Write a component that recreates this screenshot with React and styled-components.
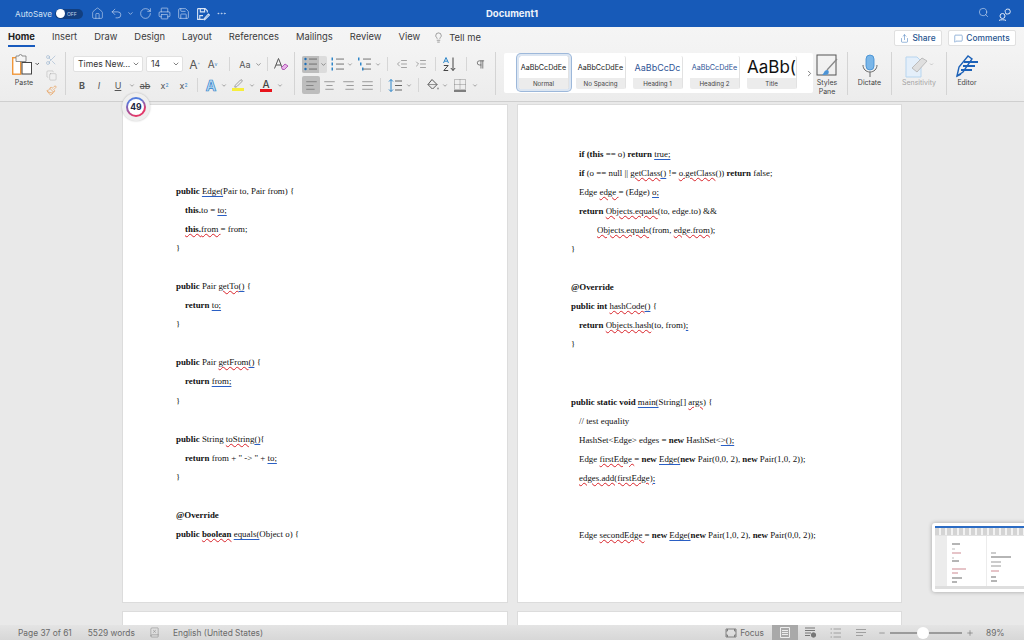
import React from "react";
import styled, { createGlobalStyle } from "styled-components";
import {
  Home, Undo2, RotateCw, Printer, Save, MoreHorizontal, Search, Lightbulb, Share, MessageSquare,
  Scissors, Copy, Paintbrush, ChevronDown, ChevronRight, IndentDecrease, IndentIncrease, Pilcrow,
  AlignLeft, AlignCenter, AlignRight, AlignJustify, Minus, Plus, BookX, Pen,
} from "lucide-react";

const Global = createGlobalStyle`
  html, body { margin: 0; padding: 0; background: #e9e9e9; }
  body { font-family: "Inter", "Liberation Sans", sans-serif; }
`;

const Shell = styled.div`
  position: relative;
  width: 1024px;
  height: 640px;
  display: flex;
  flex-direction: column;
  overflow: hidden;
`;

/* title bar */
const TitleBar = styled.header`
  height: 27px;
  flex: none;
  background: #175ab8;
  color: #dfe9f7;
  display: flex;
  align-items: center;
  padding: 0 12px 0 15px;
  position: relative;
`;
const AutoSave = styled.span`
  font-size: 8.2px;
  width: 40px;
  color: #d5e2f4;
`;
const Toggle = styled.span`
  width: 28px;
  height: 10px;
  border-radius: 6px;
  background: #123f80;
  display: flex;
  align-items: center;
  font-size: 5px;
  color: #c6d5ea;
  margin-right: 4px;
  &::before {
    content: "";
    width: 9px;
    height: 9px;
    border-radius: 50%;
    background: #fff;
    margin: 0 2px 0 1px;
  }
`;
const TitleBtn = styled.span`
  width: ${(p) => p.$w}px;
  display: flex;
  justify-content: center;
  color: #dbe6f6;
`;
const DocTitle = styled.span`
  position: absolute;
  left: 0;
  right: 0;
  text-align: center;
  font-size: 9.5px;
  font-weight: 700;
  color: #eef3fb;
  pointer-events: none;
`;
const TitleRight = styled.div`
  margin-left: auto;
  display: flex;
  gap: 9px;
  color: #e4ecf8;
`;

/* tabs */
const TabRow = styled.nav`
  height: 24px;
  flex: none;
  background: linear-gradient(#f5f5f5, #f3f3f3);
  display: flex;
  align-items: flex-start;
  padding: 0 8px;
  gap: 17px;
  position: relative;
`;
const Tab = styled.span`
  font-size: 9.4px;
  line-height: 20px;
  color: ${(p) => (p.$active ? "#222" : "#3b3b3b")};
  font-weight: ${(p) => (p.$active ? 700 : 400)};
  position: relative;
  ${(p) => p.$active && `
    &::after {
      content: "";
      position: absolute;
      left: 0;
      right: 0;
      bottom: 0;
      height: 2px;
      background: #185abd;
    }
  `}
`;
const TellMe = styled.span`
  display: flex;
  align-items: center;
  gap: 5px;
  height: 20px;
  margin-left: -4px;
  font-size: 9.4px;
  color: #3b3b3b;
`;
const TabActions = styled.div`
  margin: 3px 0 0 auto;
  display: flex;
  gap: 6px;
`;
const ActionBtn = styled.span`
  height: 16px;
  width: ${(p) => p.$w}px;
  background: #fff;
  border: 1px solid #e0e0e0;
  border-radius: 2px;
  box-sizing: border-box;
  display: flex;
  align-items: center;
  justify-content: center;
  gap: 3px;
  font-size: 8.4px;
  font-weight: 500;
  color: #27558f;
`;

/* ribbon */
const Ribbon = styled.section`
  height: 51px;
  flex: none;
  background: linear-gradient(#f3f3f3, #ececec);
  border-bottom: 1px solid #cfcfcf;
  box-sizing: border-box;
  display: flex;
  align-items: stretch;
`;
const Group = styled.div`
  width: ${(p) => p.$w}px;
  flex: none;
  box-sizing: border-box;
  padding: 5px 0 0 ${(p) => p.$pad ?? 8}px;
  margin: 1px 0 6px;
  border-right: 1px solid #d4d4d4;
  display: flex;
  flex-direction: column;
  gap: 5px;
`;
const ToolRow = styled.div`
  display: flex;
  align-items: center;
  height: 16px;
  margin-top: ${(p) => p.$top ?? 0}px;
`;
const Tool = styled.span`
  width: ${(p) => p.$w}px;
  flex: none;
  height: ${(p) => (p.$active ? 18 : 16)}px;
  display: flex;
  align-items: center;
  justify-content: center;
  font-size: ${(p) => p.$size ?? 9}px;
  font-weight: ${(p) => (p.$bold ? 700 : 400)};
  font-style: ${(p) => (p.$italic ? "italic" : "normal")};
  text-decoration: ${(p) => p.$deco ?? "none"};
  color: ${(p) => p.$color ?? "#555"};
  background: ${(p) => (p.$active ? "#bdbdbd" : "transparent")};
  border-radius: 2px;
`;
const OutlineA = styled(Tool)`
  font-size: 14px;
  font-weight: 700;
  color: #b9dcf6;
  -webkit-text-stroke: 0.7px #2f7fc8;
`;
const Raised = styled.sup`
  font-size: 5px;
  color: #2e86c9;
`;
const Lowered = styled.sub`
  font-size: 5px;
  color: #2e86c9;
`;
const Sep = styled.span`
  width: ${(p) => p.$w}px;
  flex: none;
  height: 14px;
  display: flex;
  justify-content: center;
  &::before {
    content: "";
    width: 1px;
    background: #d6d6d6;
  }
`;
const Chev = ({ w = 6 }) => (
  <Tool $w={w}>
    <ChevronDown size={7} strokeWidth={2} color="#555" />
  </Tool>
);
const FontBox = styled.span`
  width: ${(p) => p.$w}px;
  flex: none;
  height: 16px;
  margin-right: 3px;
  background: #fff;
  border: 1px solid #e1e1e1;
  border-radius: 2px;
  box-sizing: border-box;
  display: flex;
  align-items: center;
  justify-content: space-between;
  padding: 0 2px 0 4px;
  font-size: 8.6px;
  color: #333;
`;
const SplitBullets = styled.span`
  width: 25px;
  flex: none;
  height: 17px;
  background: #dcdcdc;
  border-radius: 2px;
  display: flex;
  align-items: center;
`;
const BulletPart = styled.span`
  width: 17px;
  height: 17px;
  background: #bdbdbd;
  border-radius: 2px 0 0 2px;
  display: flex;
  align-items: center;
  justify-content: center;
`;
const Clip = styled.div`
  display: flex;
  gap: 5px;
  margin-top: -3px;
`;
const PasteCol = styled.div`
  display: flex;
  flex-direction: column;
  align-items: center;
  width: 32px;
  font-size: 7px;
  color: #444;
  gap: 3px;
`;
const ClipCol = styled.div`
  display: flex;
  flex-direction: column;
  align-items: center;
  gap: 4px;
`;
const Swatch = styled.span`
  display: flex;
  flex-direction: column;
  align-items: center;
  font-size: 10px;
  line-height: 10px;
  font-weight: 500;
  color: #444;
  &::after {
    content: "";
    width: 12px;
    height: 3px;
    background: ${(p) => p.$bar};
  }
`;

/* style gallery */
const Gallery = styled.div`
  width: 309px;
  flex: none;
  height: 40px;
  margin: 2px 0 0 8px;
  background: #fff;
  border-radius: 2px;
  display: flex;
  align-items: flex-start;
  padding-left: 15px;
  box-sizing: border-box;
  gap: 7px;
`;
const StyleCard = styled.div`
  width: 50px;
  flex: none;
  margin-top: 3px;
  height: 33px;
  display: flex;
  flex-direction: column;
  border-radius: 2px;
  box-shadow: ${(p) => (p.$on ? "0 0 0 2px #dce6f2, 0 0 0 3px #9db8da" : "none")};
  border-right: 1px solid #e2e2e2;
  box-sizing: border-box;
  overflow: hidden;
`;
const StyleSample = styled.div`
  height: 22px;
  display: flex;
  align-items: center;
  justify-content: center;
  white-space: nowrap;
  overflow: hidden;
  font-size: ${(p) => p.$size ?? 7.2}px;
  color: ${(p) => p.$ink ?? "#222"};
`;
const StyleName = styled.div`
  height: 11px;
  background: #ececec;
  color: #444;
  font-size: 6.2px;
  text-align: center;
  line-height: 11px;
`;
const GalleryNext = styled.span`
  display: flex;
  align-self: center;
  margin-left: 1px;
  color: #555;
`;
const BigCol = styled.div`
  width: ${(p) => p.$w}px;
  flex: none;
  border-right: ${(p) => (p.$line ? "1px solid #d4d4d4" : "none")};
  margin: 1px 0 6px;
  box-sizing: border-box;
  display: flex;
  flex-direction: column;
  align-items: center;
  font-size: 7px;
  line-height: 9px;
  text-align: center;
  color: ${(p) => (p.$dim ? "#a4a4a4" : "#444")};
  padding: 2px ${(p) => p.$nudge ?? 0}px 0 0;
`;
const BigIcon = styled.span`
  height: 24px;
  flex: none;
  display: flex;
`;

/* document */
const Canvas = styled.main`
  flex: 1;
  min-height: 0;
  overflow: hidden;
  background: #e9e9e9;
  padding: 2px 0 0 122px;
  display: grid;
  grid-template-columns: 386px 385px;
  grid-auto-rows: min-content;
  column-gap: 9px;
  row-gap: 8px;
`;
const Page = styled.article`
  height: ${(p) => p.$h}px;
  background: #fff;
  border: 1px solid #dcdcdc;
  box-sizing: border-box;
  padding: ${(p) => p.$top}px 0 0 53px;
  font-family: "Liberation Serif", "Times New Roman", serif;
  font-size: 8.9px;
  color: #111;
`;
const Line = styled.div`
  height: 19.05px;
  line-height: 19.05px;
  white-space: pre;
  padding-left: ${(p) => p.$in ?? 0}px;
`;
const Bad = styled.span`
  text-decoration: underline wavy #d8232a 0.6px;
  text-underline-offset: 1px;
`;
const Gram = styled.span`
  text-decoration: underline solid #2a5fc4 1px;
  text-underline-offset: 1.5px;
`;
const B = styled.b`
  font-weight: 700;
`;

/* status bar */
const Status = styled.footer`
  height: 15px;
  flex: none;
  background: linear-gradient(#e4e4e4, #d7d7d7);
  display: flex;
  align-items: center;
  padding: 0 12px 0 18px;
  font-size: 8.4px;
  color: #6a6a6a;
`;
const StatusText = styled.span`
  margin: 0 ${(p) => p.$gap ?? 0}px 0 ${(p) => p.$lead ?? 0}px;
  white-space: nowrap;
`;
const StatusRight = styled.div`
  margin-left: auto;
  display: flex;
  align-items: center;
  height: 15px;
`;
const ViewBtn = styled.span`
  width: ${(p) => p.$w}px;
  height: 15px;
  display: flex;
  align-items: center;
  justify-content: center;
  background: ${(p) => (p.$on ? "#a9a9a9" : "transparent")};
  color: ${(p) => (p.$on ? "#eee" : p.$dim ? "#a0a0a0" : "#777")};
`;
const ZoomControl = styled.span`
  display: flex;
  align-items: center;
  margin-left: 5px;
`;
const Slider = styled.span`
  width: 72px;
  height: 2px;
  background: #9b9b9b;
  position: relative;
  margin: 0 4px;
  &::after {
    content: "";
    position: absolute;
    left: 27px;
    top: -5px;
    width: 12px;
    height: 12px;
    border-radius: 50%;
    background: #fff;
  }
`;
const ZoomValue = styled.span`
  width: 38px;
  padding-left: 12px;
  box-sizing: border-box;
  white-space: nowrap;
`;

/* floating things */
const Badge = styled.div`
  position: absolute;
  left: 122px;
  top: 93px;
  width: 28px;
  height: 28px;
  border-radius: 50%;
  background: #efefef;
  box-shadow: 0 0 2px rgba(0, 0, 0, 0.25);
  display: flex;
  align-items: center;
  justify-content: center;
`;
const BadgeRing = styled.div`
  width: 20px;
  height: 20px;
  border-radius: 50%;
  background: conic-gradient(from 300deg, #5a76d8, #4f7fe0 25%, #e2386a 45%, #e2386a 70%, #5a76d8);
  display: flex;
  align-items: center;
  justify-content: center;
  &::before {
    content: "49";
    width: 16px;
    height: 16px;
    line-height: 16px;
    text-align: center;
    border-radius: 50%;
    background: #fff;
    font-size: 8.6px;
    font-weight: 700;
    color: #1c2340;
  }
`;
const Thumb = styled.div`
  position: absolute;
  left: 932px;
  top: 523px;
  width: 96px;
  height: 69px;
  background: #fff;
  border-radius: 3px;
  box-shadow: 0 0 4px rgba(0, 0, 0, 0.3);
  padding: 3px;
  box-sizing: border-box;
  display: flex;
  flex-direction: column;
`;
const ThumbBar = styled.div`
  height: 2px;
  flex: none;
  background: #2b6cc4;
`;
const ThumbRibbon = styled.div`
  height: 8px;
  flex: none;
  background: repeating-linear-gradient(90deg, #d4d4d4 0 4px, #f2f2f2 4px 6px);
  border-bottom: 1px solid #e2e2e2;
  box-sizing: border-box;
`;
const ThumbBody = styled.div`
  flex: 1;
  min-height: 0;
  background: #ececec;
  padding-left: 12px;
  display: flex;
  gap: 1px;
`;
const ThumbPage = styled.div`
  width: 40px;
  background: #fff;
  padding: ${(p) => p.$top}px 0 0 ${(p) => p.$left}px;
  box-sizing: border-box;
`;
const ThumbLine = styled.div`
  height: 2px;
  width: ${(p) => p.$w}px;
  background: ${(p) => p.$c};
  margin-bottom: ${(p) => p.$gap}px;
`;
const ThumbStatus = styled.div`
  height: 3px;
  flex: none;
  background: #dedede;
`;

/* drawn icons */
const PasteIcon = () => (
  <svg width="32" height="21" viewBox="0 0 32 21" fill="none">
    <rect x="4.700" y="3.700" width="8" height="16.500" fill="#fff" stroke="#f0973a" strokeWidth="1.400" />
    <path d="M8 4V2h3a1.500 1.500 0 0 1 3 0h4v5.500H8Z" fill="#f4f4f4" stroke="#777" strokeWidth=".8" />
    <rect x="14" y="8.500" width="9.500" height="11.500" fill="#fff" stroke="#444" strokeWidth="1" />
    <path d="M27.500 9l1.700 1.700L31 9" stroke="#555" strokeWidth="1" />
  </svg>
);
const ListGlyph = ({ kind }) => {
  const ys = [3, 8, 13];
  const x = kind === "multi" ? [6, 9, 6] : [6, 6, 6];
  return (
    <svg width="15" height="16" viewBox="0 0 15 16">
      {ys.map((y, i) => (
        <g key={y}>
          {kind === "bullets" ? (
            <circle cx="2.500" cy={y} r="1.200" fill="#1f6fb8" />
          ) : (
            <rect x={kind === "multi" ? i * 2 + 1 : 1.500} y={y - 1.500} width="1.500" height="3" fill="#2e86c9" />
          )}
          <rect x={x[i]} y={y - 0.400} width={14 - x[i]} height="0.900" fill="#666" />
        </g>
      ))}
    </svg>
  );
};
const SortIcon = () => (
  <svg width="16" height="16" viewBox="0 0 16 16" fill="none">
    <path d="M1.500 7 4 1.500 6.500 7M2.400 5.200h3.200" stroke="#2e86c9" strokeWidth="1" />
    <path d="M1.800 9.500h4.400l-4.400 5h4.400" stroke="#444" strokeWidth="1" />
    <path d="M11 1.500v13M8.800 12l2.200 2.500 2.200-2.500" stroke="#444" strokeWidth="1" />
  </svg>
);
const SpacingIcon = () => (
  <svg width="15" height="15" viewBox="0 0 15 15" fill="none">
    <path d="M3 1.500v12M1 3.500l2-2 2 2M1 11.500l2 2 2-2" stroke="#2e86c9" strokeWidth="1" />
    <path d="M7 3h7M7 7.500h7M7 12h7" stroke="#666" strokeWidth="1" />
  </svg>
);
const ShadeIcon = () => (
  <svg width="14" height="14" viewBox="0 0 14 14" fill="none">
    <path d="M6 1.500 11 6.500 6.500 11 2 6.500Z" stroke="#555" strokeWidth="1" />
    <path d="M2 6.500h9L6.500 11Z" fill="#e9e9e9" stroke="#555" strokeWidth=".6" />
    <circle cx="12" cy="10.500" r="1" fill="#999" />
  </svg>
);
const BorderIcon = () => (
  <svg width="14" height="14" viewBox="0 0 14 14" fill="none">
    <rect x="1.500" y="1.500" width="11" height="10" stroke="#777" strokeWidth=".8" strokeDasharray="1 1" />
    <path d="M7 1.500v10M1.500 6.500h11" stroke="#777" strokeWidth=".8" strokeDasharray="1 1" />
    <path d="M1 13h12" stroke="#333" strokeWidth="1.200" />
  </svg>
);
const ClearIcon = () => (
  <svg width="16" height="14" viewBox="0 0 16 14" fill="none">
    <path d="M1.500 11.500 5.500 1.500 9.500 11.500M3 8h5" stroke="#555" strokeWidth="1" />
    <path d="M8.500 10.500 12 7l3 2-3.500 3.500h-2Z" fill="#e7b3e8" stroke="#a33ca8" strokeWidth=".8" />
  </svg>
);
const StylesPaneIcon = () => (
  <svg width="22" height="23" viewBox="0 0 22 23" fill="none">
    <rect x="1" y="1" width="19" height="20" stroke="#555" strokeWidth="1" />
    <path d="M21 5 11 16" stroke="#888" strokeWidth="1.300" />
    <path d="M6 21c2-1 2-5 5-5 2 0 2 2 1.500 3.500-.5 1-2 1.500-6.500 1.500Z" fill="#4b93d6" />
  </svg>
);
const MicIcon = () => (
  <svg width="18" height="24" viewBox="0 0 18 24" fill="none">
    <rect x="5" y="1" width="8" height="15" rx="4" fill="#7ab6e8" stroke="#3d8bd0" strokeWidth=".8" />
    <path d="M2 11c0 4 3 7 7 7s7-3 7-7M9 18v5" stroke="#666" strokeWidth="1" />
  </svg>
);
const SensitivityIcon = () => (
  <svg width="30" height="24" viewBox="0 0 30 24" fill="none">
    <path d="M2 3h11l4 4v16H2Z" fill="#e4effa" stroke="#b7d5ef" strokeWidth="1" />
    <path d="M8 14 18 4l5 3-10 11Z" fill="#dfdfdf" stroke="#bcbcbc" strokeWidth="1" />
    <path d="M26 9.500l1.500 1.500L29 9.500" stroke="#bbb" strokeWidth=".8" />
  </svg>
);
const EditorIcon = () => (
  <svg width="24" height="24" viewBox="0 0 24 24" fill="none">
    <path d="M2 22 4 13 13 2l4 3-9 13Z" stroke="#1d62b8" strokeWidth="1.400" />
    <path d="M9 8h14M8 12h12M6 16h11" stroke="#1d62b8" strokeWidth="2" />
    <path d="M2 22l4-2" stroke="#1d62b8" strokeWidth="1.400" />
  </svg>
);
const FocusIcon = () => (
  <svg width="12" height="10" viewBox="0 0 12 10" fill="none" stroke="#777" strokeWidth=".9">
    <path d="M1 1h10v8H1ZM1 3h1.500V1M11 3H9.500V1M1 7h1.500v2M11 7H9.500v2" />
  </svg>
);
const SaveAsIcon = () => (
  <svg width="14" height="14" viewBox="0 0 13 13" fill="none" stroke="#dbe6f6" strokeWidth="1">
    <path d="M1.500 1.500h7l2 2v1.500M1.500 1.500v10h5M4 1.500v3h4v-3M3.500 11.500V8h3" />
    <path d="M7 11.500 11.500 6.500l1 1L8 12Z" />
  </svg>
);
const PeopleIcon = () => (
  <svg width="14" height="14" viewBox="0 0 14 14" fill="none" stroke="#e4ecf8" strokeWidth="1">
    <circle cx="4.500" cy="9" r="2.500" />
    <path d="M7.500 5.500a2.500 2.500 0 1 1 2 1.500H8Z" />
    <path d="M1 13.500c.5-1 6-1 7 0" />
  </svg>
);
const PrintLayoutIcon = () => (
  <svg width="12" height="11" viewBox="0 0 12 11" fill="none" stroke="currentColor" strokeWidth="1">
    <path d="M1.500 .500h9v10h-9ZM3 3.500h6M3 5.500h6M3 7.500h6" />
  </svg>
);
const WebLayoutIcon = () => (
  <svg width="13" height="11" viewBox="0 0 13 11" fill="none" stroke="currentColor" strokeWidth="1">
    <path d="M1 1h10M1 3.500h10M1 6h6M1 8.500h5" />
    <circle cx="9.500" cy="8" r="2.200" fill="currentColor" />
  </svg>
);
const OutlineIcon = () => (
  <svg width="12" height="10" viewBox="0 0 12 10" fill="none" stroke="currentColor" strokeWidth="1">
    <path d="M3.500 1H11M3.500 5H11M3.500 9H11M.500 1h1.500M.500 5h1.500M.500 9h1.500" />
  </svg>
);
const DraftIcon = () => (
  <svg width="12" height="10" viewBox="0 0 12 10" fill="none" stroke="currentColor" strokeWidth="1">
    <path d="M1 1.500h10M1 4.500h10M1 7.500h7" />
  </svg>
);

const leftPage = (
  <>
    <Line><B>public</B> <Gram>Edge(</Gram>Pair to, Pair from) {"{"}</Line>
    <Line $in={9}><B>this.</B>to = <Gram>to;</Gram></Line>
    <Line $in={9}><Bad><B>this.</B>from </Bad>= from;</Line>
    <Line>{"}"}</Line>
    <Line />
    <Line><B>public</B> Pair <Bad>getTo</Bad><Gram>()</Gram> {"{"}</Line>
    <Line $in={9}><B>return</B> <Gram>to;</Gram></Line>
    <Line>{"}"}</Line>
    <Line />
    <Line><B>public</B> Pair <Bad>getFrom</Bad><Gram>()</Gram> {"{"}</Line>
    <Line $in={9}><B>return</B> <Gram>from;</Gram></Line>
    <Line>{"}"}</Line>
    <Line />
    <Line><B>public</B> String <Bad>toString</Bad><Gram>()</Gram>{"{"}</Line>
    <Line $in={9}><B>return</B> from + " -&gt; " + <Gram>to;</Gram></Line>
    <Line>{"}"}</Line>
    <Line />
    <Line><B>@Override</B></Line>
    <Line><B>public</B> <Bad><B>boolean</B></Bad> <Gram>equals(</Gram>Object o) {"{"}</Line>
  </>
);

const rightPage = (
  <>
    <Line $in={8}><B>if (this</B> == o) <B>return</B> <Gram>true;</Gram></Line>
    <Line $in={8}><B>if</B> (o == null || <Bad>getClass</Bad><Gram>()</Gram> != <Bad>o.getClass</Bad>()) <B>return</B> false;</Line>
    <Line $in={8}>Edge <Bad>edge </Bad>= (Edge) <Gram>o;</Gram></Line>
    <Line $in={8}><B>return</B> <Bad>Objects.equals</Bad>(to, edge.to) &amp;&amp;</Line>
    <Line $in={26}><Bad>Objects.equals</Bad>(from, <Bad>edge.from</Bad>);</Line>
    <Line>{"}"}</Line>
    <Line />
    <Line><B>@Override</B></Line>
    <Line><B>public int</B> <Bad>hashCode</Bad><Gram>()</Gram> {"{"}</Line>
    <Line $in={8}><B>return</B> <Bad>Objects.hash</Bad>(to, from)<Gram>;</Gram></Line>
    <Line>{"}"}</Line>
    <Line />
    <Line />
    <Line><B>public static void</B> <Gram>main(</Gram>String[] <Bad>args</Bad>) {"{"}</Line>
    <Line $in={8}>// test equality</Line>
    <Line $in={8}>HashSet&lt;Edge&gt; edges = <B>new</B> HashSet&lt;<Gram>&gt;();</Gram></Line>
    <Line $in={8}>Edge <Bad>firstEdge </Bad>= <B>new</B> <Gram>Edge(</Gram><B>new</B> Pair(0,0, 2), <B>new</B> Pair(1,0, 2));</Line>
    <Line $in={8}><Bad>edges.add(firstEdge)</Bad><Gram>;</Gram></Line>
    <Line />
    <Line />
    <Line $in={8}>Edge <Bad>secondEdge </Bad>= <B>new</B> <Gram>Edge(</Gram><B>new</B> Pair(1,0, 2), <B>new</B> Pair(0,0, 2));</Line>
  </>
);

const INK = "#b5b5b5";
const PINK = "#e6c4c8";
const thumbLeft = [
  { w: 8, c: INK, gap: 3 }, { w: 3, c: "#ddd", gap: 2 }, { w: 9, c: PINK, gap: 3 }, { w: 2, c: "#ddd", gap: 1 },
  { w: 7, c: INK, gap: 6 }, { w: 14, c: PINK, gap: 2 }, { w: 6, c: PINK, gap: 3 }, { w: 10, c: INK, gap: 2 },
  { w: 5, c: INK, gap: 0 },
];
const thumbRight = [
  { w: 5, c: "#ccc", gap: 2 }, { w: 20, c: INK, gap: 3 }, { w: 10, c: "#ccc", gap: 2 }, { w: 10, c: "#ccc", gap: 3 },
  { w: 8, c: PINK, gap: 4 }, { w: 5, c: INK, gap: 2 }, { w: 6, c: INK, gap: 0 },
];

export default function App() {
  return (
    <Shell>
      <Global />
      <TitleBar>
        <AutoSave>AutoSave</AutoSave>
        <Toggle>OFF</Toggle>
        <TitleBtn $w={20}><Home size={13} strokeWidth={1} /></TitleBtn>
        <TitleBtn $w={18}><Undo2 size={13} strokeWidth={1.1} /></TitleBtn>
        <TitleBtn $w={10}><ChevronDown size={7} /></TitleBtn>
        <TitleBtn $w={20}><RotateCw size={13} strokeWidth={1.1} /></TitleBtn>
        <TitleBtn $w={18}><Printer size={13} strokeWidth={1.1} /></TitleBtn>
        <TitleBtn $w={20}><Save size={13} strokeWidth={1.1} /></TitleBtn>
        <TitleBtn $w={19}><SaveAsIcon /></TitleBtn>
        <TitleBtn $w={18}><MoreHorizontal size={11} strokeWidth={1.4} /></TitleBtn>
        <DocTitle>Document1</DocTitle>
        <TitleRight>
          <Search size={11} strokeWidth={1.2} />
          <PeopleIcon />
        </TitleRight>
      </TitleBar>

      <TabRow>
        <Tab $active>Home</Tab>
        <Tab>Insert</Tab>
        <Tab>Draw</Tab>
        <Tab>Design</Tab>
        <Tab>Layout</Tab>
        <Tab>References</Tab>
        <Tab>Mailings</Tab>
        <Tab>Review</Tab>
        <Tab>View</Tab>
        <TellMe><Lightbulb size={11} strokeWidth={1} />Tell me</TellMe>
        <TabActions>
          <ActionBtn $w={48}><Share size={9} strokeWidth={1.3} color="#2d6cb5" />Share</ActionBtn>
          <ActionBtn $w={68}><MessageSquare size={9} strokeWidth={1.3} color="#2d6cb5" />Comments</ActionBtn>
        </TabActions>
      </TabRow>

      <Ribbon>
        <Group $w={66} $pad={8}>
          <Clip>
            <PasteCol>
              <PasteIcon />
              Paste
            </PasteCol>
            <ClipCol>
              <Scissors size={12} strokeWidth={1} color="#8aa9c8" />
              <Copy size={11} strokeWidth={1} color="#aaa" />
              <Paintbrush size={11} strokeWidth={1.2} color="#e88c36" />
            </ClipCol>
          </Clip>
        </Group>

        <Group $w={229} $pad={7}>
          <ToolRow $top={-1}>
            <FontBox $w={70}>Times New...<ChevronDown size={8} color="#444" /></FontBox>
            <FontBox $w={37}>14<ChevronDown size={8} color="#444" /></FontBox>
            <Tool $w={17} $size={12}>A<Raised>^</Raised></Tool>
            <Tool $w={19} $size={10}>A<Raised>v</Raised></Tool>
            <Sep $w={14} />
            <Tool $w={18}>Aa</Tool>
            <Chev w={8} />
            <Sep $w={10} />
            <Tool $w={18}><ClearIcon /></Tool>
          </ToolRow>
          <ToolRow>
            <Tool $w={18} $bold>B</Tool>
            <Tool $w={16} $italic>I</Tool>
            <Tool $w={22} $deco="underline">U</Tool>
            <Chev />
            <Tool $w={20} $deco="line-through">ab</Tool>
            <Tool $w={19}>x<Lowered>2</Lowered></Tool>
            <Tool $w={19}>x<Raised>2</Raised></Tool>
            <Sep $w={8} />
            <OutlineA $w={20}>A</OutlineA>
            <Chev />
            <Tool $w={22}><Swatch $bar="#f6ee3c"><Pen size={9} strokeWidth={1.2} /></Swatch></Tool>
            <Chev />
            <Tool $w={22}><Swatch $bar="#e8141c">A</Swatch></Tool>
            <Chev />
          </ToolRow>
        </Group>

        <Group $w={201} $pad={7}>
          <ToolRow $top={-1}>
            <SplitBullets>
              <BulletPart><ListGlyph kind="bullets" /></BulletPart>
              <Chev w={8} />
            </SplitBullets>
            <Tool $w={20}><ListGlyph kind="numbers" /></Tool>
            <Chev />
            <Tool $w={22}><ListGlyph kind="multi" /></Tool>
            <Chev />
            <Sep $w={12} />
            <Tool $w={18}><IndentDecrease size={12} strokeWidth={1} /></Tool>
            <Tool $w={20}><IndentIncrease size={12} strokeWidth={1} /></Tool>
            <Sep $w={8} />
            <Tool $w={22}><SortIcon /></Tool>
            <Sep $w={10} />
            <Tool $w={18}><Pilcrow size={11} strokeWidth={1.6} /></Tool>
          </ToolRow>
          <ToolRow>
            <Tool $w={18} $active><AlignLeft size={13} strokeWidth={1} /></Tool>
            <Tool $w={18}><AlignCenter size={13} strokeWidth={1} /></Tool>
            <Tool $w={20}><AlignRight size={13} strokeWidth={1} /></Tool>
            <Tool $w={18}><AlignJustify size={13} strokeWidth={1} /></Tool>
            <Sep $w={8} />
            <Tool $w={22}><SpacingIcon /></Tool>
            <Chev />
            <Sep $w={12} />
            <Tool $w={18}><ShadeIcon /></Tool>
            <Chev />
            <Tool $w={24}><BorderIcon /></Tool>
            <Chev />
          </ToolRow>
        </Group>

        <Gallery>
          <StyleCard $on>
            <StyleSample>AaBbCcDdEe</StyleSample>
            <StyleName>Normal</StyleName>
          </StyleCard>
          <StyleCard>
            <StyleSample>AaBbCcDdEe</StyleSample>
            <StyleName>No Spacing</StyleName>
          </StyleCard>
          <StyleCard>
            <StyleSample $size={9} $ink="#2f5496">AaBbCcDc</StyleSample>
            <StyleName>Heading 1</StyleName>
          </StyleCard>
          <StyleCard>
            <StyleSample $ink="#2f5496">AaBbCcDdEe</StyleSample>
            <StyleName>Heading 2</StyleName>
          </StyleCard>
          <StyleCard>
            <StyleSample $size={17} $ink="#111">AaBb(</StyleSample>
            <StyleName>Title</StyleName>
          </StyleCard>
          <GalleryNext><ChevronRight size={9} /></GalleryNext>
        </Gallery>

        <BigCol $w={35} $line $nudge={6}>
          <BigIcon><StylesPaneIcon /></BigIcon>
          <span>Styles<br />Pane</span>
        </BigCol>
        <BigCol $w={44} $line>
          <BigIcon><MicIcon /></BigIcon>
          <span>Dictate</span>
        </BigCol>
        <BigCol $w={55} $line $dim>
          <BigIcon><SensitivityIcon /></BigIcon>
          <span>Sensitivity</span>
        </BigCol>
        <BigCol $w={40}>
          <BigIcon><EditorIcon /></BigIcon>
          <span>Editor</span>
        </BigCol>
      </Ribbon>

      <Canvas>
        <Page $h={499} $top={77}>{leftPage}</Page>
        <Page $h={499} $top={40}>{rightPage}</Page>
        <Page $h={30} $top={0} />
        <Page $h={30} $top={0} />
      </Canvas>

      <Status>
        <StatusText $gap={16}>Page 37 of 61</StatusText>
        <StatusText $gap={14}>5529 words</StatusText>
        <BookX size={11} strokeWidth={1} color="#777" />
        <StatusText $lead={13}>English (United States)</StatusText>
        <StatusRight>
          <ViewBtn $w={13}><FocusIcon /></ViewBtn>
          <StatusText $lead={3} $gap={8}>Focus</StatusText>
          <ViewBtn $w={26} $on><PrintLayoutIcon /></ViewBtn>
          <ViewBtn $w={25}><WebLayoutIcon /></ViewBtn>
          <ViewBtn $w={25} $dim><OutlineIcon /></ViewBtn>
          <ViewBtn $w={25} $dim><DraftIcon /></ViewBtn>
          <ZoomControl>
            <Minus size={8} color="#777" strokeWidth={2} />
            <Slider />
            <Plus size={8} color="#777" strokeWidth={2} />
          </ZoomControl>
          <ZoomValue>89%</ZoomValue>
        </StatusRight>
      </Status>

      <Badge><BadgeRing /></Badge>

      <Thumb>
        <ThumbBar />
        <ThumbRibbon />
        <ThumbBody>
          <ThumbPage $top={7} $left={5}>
            {thumbLeft.map((l, i) => <ThumbLine key={i} $w={l.w} $c={l.c} $gap={l.gap} />)}
          </ThumbPage>
          <ThumbPage $top={16} $left={4}>
            {thumbRight.map((l, i) => <ThumbLine key={i} $w={l.w} $c={l.c} $gap={l.gap} />)}
          </ThumbPage>
        </ThumbBody>
        <ThumbStatus />
      </Thumb>
    </Shell>
  );
}
